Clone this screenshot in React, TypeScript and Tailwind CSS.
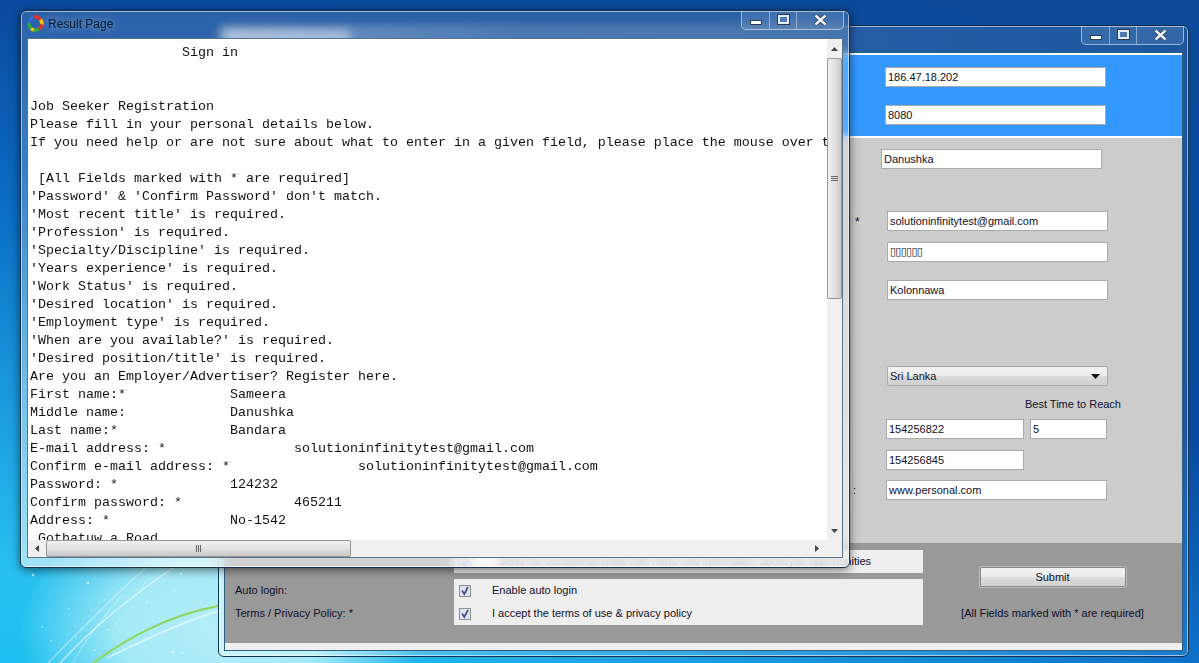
import React from "react";

const mono = "font-['Liberation_Mono','Courier_New',monospace]";
const ui = "font-['Liberation_Sans',Arial,sans-serif]";

const lines = [
  "                   Sign in",
  "",
  "",
  "Job Seeker Registration",
  "Please fill in your personal details below.",
  "If you need help or are not sure about what to enter in a given field, please place the mouse over the",
  "",
  " [All Fields marked with * are required]",
  "'Password' & 'Confirm Password' don't match.",
  "'Most recent title' is required.",
  "'Profession' is required.",
  "'Specialty/Discipline' is required.",
  "'Years experience' is required.",
  "'Work Status' is required.",
  "'Desired location' is required.",
  "'Employment type' is required.",
  "'When are you available?' is required.",
  "'Desired position/title' is required.",
  "Are you an Employer/Advertiser? Register here.",
  "First name:*             Sameera",
  "Middle name:             Danushka",
  "Last name:*              Bandara",
  "E-mail address: *                solutioninfinitytest@gmail.com",
  "Confirm e-mail address: *                solutioninfinitytest@gmail.com",
  "Password: *              124232",
  "Confirm password: *              465211",
  "Address: *               No-1542",
  " Gothatuw a Road",
];

const stars = [
  [33, 575], [69, 609], [42, 627], [51, 641], [88, 583], [134, 566], [147, 602], [116, 624], [181, 574], [174, 590], [108, 630], [76, 637], [173, 652], [182, 653], [95, 650],
];

const CaptionButtons = ({ className }: { className: string }) => (
  <div className={`absolute flex h-[19px] w-[103px] rounded-b-[5px] border border-t-0 border-white/50 bg-white/10 ${className}`}>
    <div className="flex w-[28px] items-end justify-center border-r border-white/40 pb-[4px]">
      <div className="h-[5px] w-[12px] border border-[#2a3b52] bg-white" />
    </div>
    <div className="flex w-[27px] items-center justify-center border-r border-white/40 pb-[1px]">
      <div className="h-[9px] w-[11px] border-2 border-[#e6ecf3] bg-[#4a7ab0] outline outline-1 outline-[#2a3b52]" />
    </div>
    <div className="flex flex-1 items-center justify-center pb-[1px]">
      <svg width="15" height="12" viewBox="0 0 15 12">
        <path d="M2.5 1.5 L12.5 10.5 M12.5 1.5 L2.5 10.5" stroke="#2a3b52" strokeWidth="4" />
        <path d="M2.5 1.5 L12.5 10.5 M12.5 1.5 L2.5 10.5" stroke="#f2f5f9" strokeWidth="2.4" />
      </svg>
    </div>
  </div>
);

const Field = ({ value, className }: { value: string; className?: string }) => (
  <div className={`flex h-[20px] items-center border border-[#aaaaaa] bg-white pl-[2px] text-[11px] text-[#10102a] ${className ?? ""}`}>
    {value}
  </div>
);

const Check = () => (
  <div className="flex h-[12px] w-[12px] items-center justify-center border border-[#8e8f8f] bg-[#dfe4f0]">
    <svg width="10" height="10" viewBox="0 0 10 10">
      <path d="M2 4.5 L4.3 8 L8 1" fill="none" stroke="#3d4f8e" strokeWidth="1.7" />
    </svg>
  </div>
);

const Logo = () => (
  <svg width="17" height="17" viewBox="0 0 17 17" className="shrink-0">
    <g fill="none" strokeWidth="3.6">
      <path d="M3 5 A7 7 0 0 1 7 1.9" stroke="#2a6fd0" />
      <path d="M7 1.9 A7 7 0 0 1 13.5 4.5" stroke="#e0342b" />
      <path d="M13.5 4.5 A7 7 0 0 1 15 9.5" stroke="#f7c400" />
      <path d="M15 9.5 A7 7 0 0 1 12 14" stroke="#e0342b" />
      <path d="M12 14 A7 7 0 0 1 7 15" stroke="#3aa648" />
      <path d="M7 15 A7 7 0 0 1 4 13.5" stroke="#f7c400" />
      <path d="M4 13.5 A7 7 0 0 1 2 8" stroke="#3aa648" />
      <path d="M2 8 A7 7 0 0 1 3 5" stroke="#2a6fd0" />
    </g>
  </svg>
);

const Wallpaper = () => (
  <svg className="absolute inset-0" width="1199" height="663" viewBox="0 0 1199 663">
    <path d="M93 663 C125 640 165 616 218 606" fill="none" stroke="#8fd65a" strokeWidth="2" />
    <path d="M107 658 C140 642 175 625 218 611" fill="none" stroke="#ffffff" strokeOpacity="0.5" strokeWidth="2" />
    <path d="M48 663 C85 625 120 590 147 567" fill="none" stroke="#ffffff" strokeOpacity="0.4" strokeWidth="1.5" />
    <path d="M60 663 C95 625 140 590 177 565" fill="none" stroke="#ffffff" strokeOpacity="0.6" strokeWidth="1.5" />
    <path d="M73 663 C85 640 105 615 122 595" fill="none" stroke="#ffffff" strokeOpacity="0.25" strokeWidth="1.5" />
    {stars.map(([x, y], i) => (
      <circle key={i} cx={x} cy={y} r={i % 4 === 0 ? 1.2 : 0.8} fill="#ffffff" fillOpacity="0.75" />
    ))}
  </svg>
);

export default function App() {
  return (
    <div className={`relative h-[663px] w-[1199px] overflow-hidden bg-[linear-gradient(200deg,#0a4a98_0%,#0a4a9e_40%,#0a6cc4_58%,#1a9ade_76%,#28c0f0_91%,#1cc0f0_100%)] ${ui}`}>
      <div className="absolute left-[20px] top-[490px] h-[280px] w-[400px] bg-[radial-gradient(ellipse_closest-side,#b4eef7_0%,#a4eaf6_50%,#a4eaf600_100%)]" />
      <Wallpaper />

      {/* window behind */}
      <div className="absolute left-[218px] top-[25px] flex h-[632px] w-[971px] flex-col rounded-[6px] border border-[#16304f] bg-[linear-gradient(90deg,#ffffff55_0%,#ffffff25_30%,#ffffff12_100%)] px-[6px] pb-[6px] pt-[27px] shadow-[inset_0_0_0_1px_rgba(255,255,255,0.55)]">
        <div className="absolute left-[6px] top-[3px] h-[22px] w-[125px] rounded-[4px] bg-white/40" />
        <CaptionButtons className="right-[4px] top-0" />
        <div className="flex flex-1 flex-col bg-white pt-[2px] shadow-[0_0_0_1px_#2f5f7f]">
          <div className="h-[81px] bg-[#3399ff] pl-[660px] pt-[12px]">
            <Field value="186.47.18.202" className="w-[221px]" />
            <Field value="8080" className="mt-[18px] w-[221px]" />
          </div>
          <div className="mt-[2px] h-[405px] bg-[#cccccc] pt-[11px] text-[11px] text-[#10102a]">
            <Field value="Danushka" className="ml-[656px] w-[221px]" />
            <div className="relative ml-[662px] mt-[42px] w-[221px]">
              <span className="absolute left-[-32px] top-[2px] text-[12px]">*</span>
              <Field value="solutioninfinitytest@gmail.com" />
            </div>
            <Field value="▯▯▯▯▯▯" className="ml-[662px] mt-[11px] h-[19px] w-[221px] tracking-[-0.7px] font-['DejaVu_Sans',sans-serif]" />
            <Field value="Kolonnawa" className="ml-[662px] mt-[18px] w-[221px]" />
            <div className="ml-[662px] mt-[66px] flex h-[20px] w-[221px] items-center justify-between rounded-[2px] border border-[#aaaaaa] bg-[linear-gradient(180deg,#f2f2f2_0%,#ebebeb_48%,#dcdcdc_52%,#cfcfcf_100%)] pl-[2px] pr-[7px]">
              <span>Sri Lanka</span>
              <svg width="9" height="5" viewBox="0 0 9 5"><path d="M0 0 H9 L4.5 5 Z" fill="#111" /></svg>
            </div>
            <div className="ml-[800px] mt-[9px] h-[18px] leading-[18px]">Best Time to Reach</div>
            <div className="ml-[661px] mt-[6px] flex gap-[6px]">
              <Field value="154256822" className="w-[138px]" />
              <Field value="5" className="w-[77px]" />
            </div>
            <Field value="154256845" className="ml-[661px] mt-[11px] w-[138px]" />
            <div className="relative ml-[661px] mt-[10px] w-[221px]">
              <span className="absolute left-[-33px] top-[2px]">:</span>
              <Field value="www.personal.com" />
            </div>
          </div>
          <div className="flex h-[100px] bg-[#999999] text-[11px] text-[#10102a]">
            <div className="w-[229px] pl-[10px] pt-[38px]">
              <div className="h-[23px] leading-[18px]">Auto login:</div>
              <div className="leading-[18px]">Terms / Privacy Policy: *</div>
            </div>
            <div className="w-[469px] pt-[7px]">
              <div className="flex h-[23px] items-center justify-between bg-[#eeeeee] pl-[5px] pr-[52px]">
                <Check />
                <span className="whitespace-nowrap">Send me occasional email with news and information about job opportunities</span>
              </div>
              <div className="mt-[6px] flex h-[46px] flex-col bg-[#eeeeee] pl-[5px]">
                <div className="flex h-[23px] items-center gap-[21px]"><Check /><span>Enable auto login</span></div>
                <div className="flex h-[23px] items-center gap-[21px]"><Check /><span>I accept the terms of use &amp; privacy policy</span></div>
              </div>
            </div>
            <div className="flex flex-1 flex-col items-center pt-[24px]">
              <div className="flex h-[20px] w-[146px] items-center justify-center rounded-[2px] border border-[#8a8a8a] bg-[linear-gradient(180deg,#f2f2f2_0%,#ebebeb_48%,#dddddd_52%,#cfcfcf_100%)] shadow-[0_0_0_1px_#ffffff55]">Submit</div>
              <div className="mt-[18px] whitespace-nowrap">[All Fields marked with * are required]</div>
            </div>
          </div>
          <div className="flex-1 bg-[#eeeeee]" />
        </div>
      </div>

      {/* result page window */}
      <div className="absolute left-[20px] top-[10px] flex h-[558px] w-[830px] flex-col rounded-[6px] border border-[#16304f] bg-[linear-gradient(180deg,#ffffff22_0%,#ffffff30_30%,#ffffff90_100%)] px-[6px] pb-[9px] shadow-[0_2px_10px_rgba(0,0,0,0.55),inset_0_0_0_1px_rgba(255,255,255,0.55)] backdrop-blur-[4px]">
        <CaptionButtons className="right-[5px] top-0" />
        <div className="flex h-[27px] items-center gap-[4px] pb-[2px]">
          <Logo />
          <span className="text-[12px] text-[#0c1a2c] [text-shadow:0_0_8px_rgba(255,255,255,0.6)]">Result Page</span>
        </div>
        <div className="flex min-h-0 flex-1 flex-col border border-[#5c7288] bg-white">
          <div className="flex min-h-0 flex-1">
            <div className={`min-w-0 flex-1 overflow-hidden whitespace-pre pl-[2px] pt-[5px] text-[13.33px] leading-[18px] text-[#111111] ${mono}`}>
              {lines.map((line, i) => (
                <div key={i} className="h-[18px]">{line}</div>
              ))}
            </div>
            <div className="flex w-[15px] flex-col bg-[#f0f0f0]">
              <div className="flex h-[19px] items-center justify-center">
                <svg width="7" height="4" viewBox="0 0 7 4"><path d="M3.5 0 L7 4 H0 Z" fill="#444" /></svg>
              </div>
              <div className="flex h-[241px] flex-col justify-center rounded-[2px] border border-[#979797] bg-[linear-gradient(90deg,#f0f0f0_0%,#e4e4e4_45%,#c8c8c8_100%)]">
                <div className="mx-auto flex w-[7px] flex-col gap-[1px]">
                  <div className="h-px bg-[#666]" />
                  <div className="h-px bg-[#666]" />
                  <div className="h-px bg-[#666]" />
                </div>
              </div>
              <div className="flex-1" />
              <div className="flex h-[18px] items-center justify-center">
                <svg width="7" height="4" viewBox="0 0 7 4"><path d="M0 0 H7 L3.5 4 Z" fill="#444" /></svg>
              </div>
            </div>
          </div>
          <div className="flex h-[17px] bg-[#f0f0f0]">
            <div className="flex w-[18px] items-center justify-center">
              <svg width="4" height="7" viewBox="0 0 4 7"><path d="M4 0 V7 L0 3.5 Z" fill="#444" /></svg>
            </div>
            <div className="flex w-[305px] items-center justify-center rounded-[2px] border border-[#979797] bg-[linear-gradient(180deg,#f0f0f0_0%,#e4e4e4_45%,#c8c8c8_100%)]">
              <div className="flex h-[7px] gap-[1px]">
                <div className="w-px bg-[#666]" />
                <div className="w-px bg-[#666]" />
                <div className="w-px bg-[#666]" />
              </div>
            </div>
            <div className="flex flex-1 items-center justify-end pr-[23px]">
              <svg width="4" height="7" viewBox="0 0 4 7"><path d="M0 0 V7 L4 3.5 Z" fill="#444" /></svg>
            </div>
          </div>
        </div>
      </div>
    </div>
  );
}
